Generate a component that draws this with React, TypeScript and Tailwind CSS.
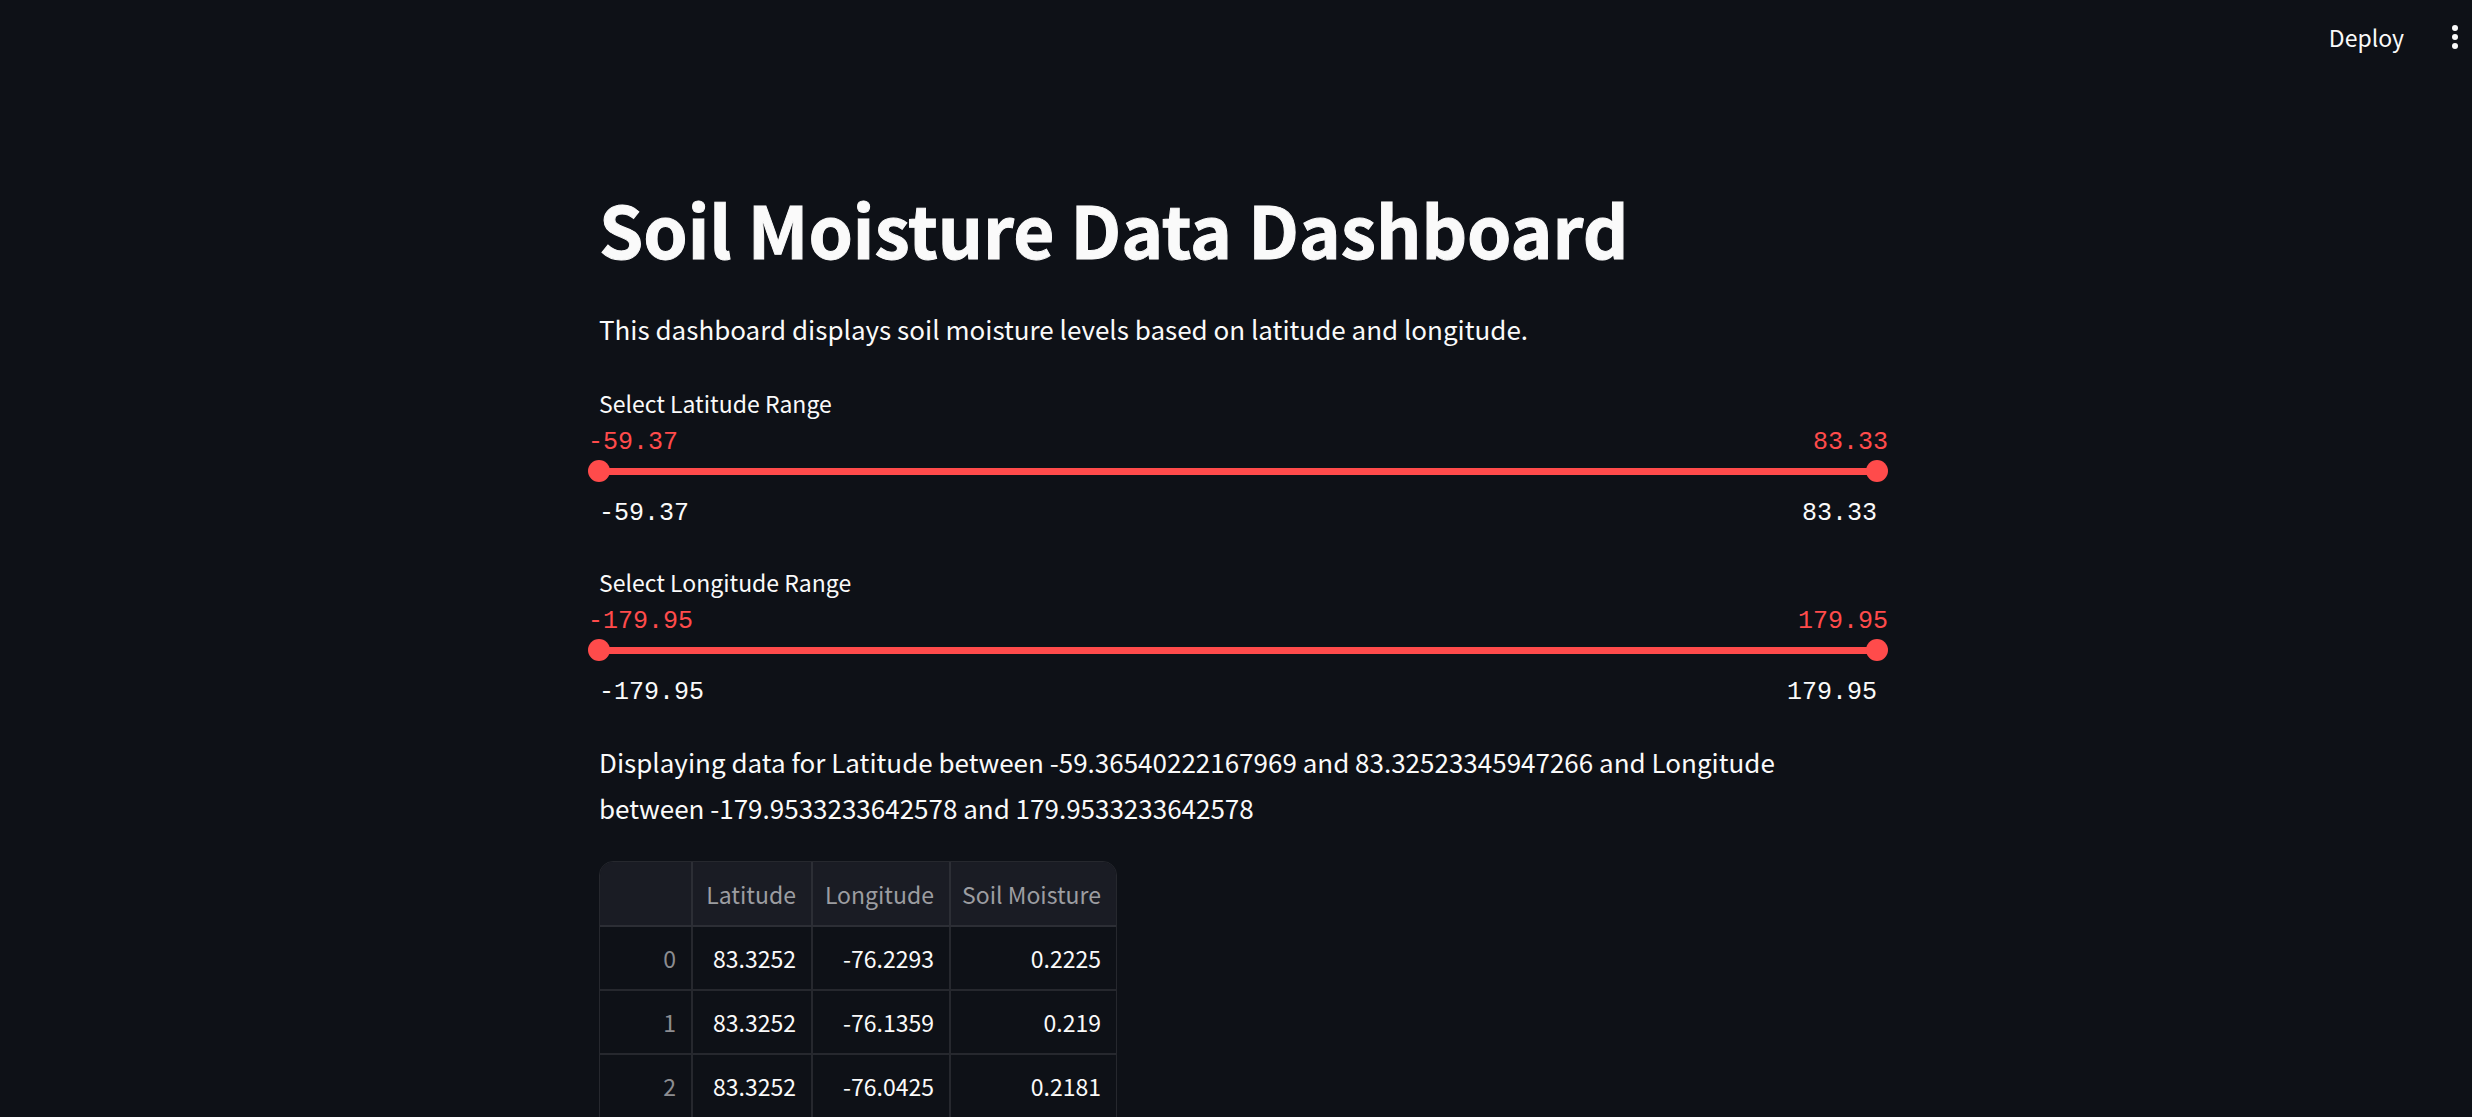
import { useId, useState } from "react";

const rows = [
  ["83.3252", "-76.2293", "0.2225"],
  ["83.3252", "-76.1359", "0.219"],
  ["83.3252", "-76.0425", "0.2181"],
];

const thumbInput =
  "pointer-events-none absolute inset-0 m-0 h-[22px] w-full appearance-none bg-transparent outline-none [&::-webkit-slider-thumb]:pointer-events-auto [&::-webkit-slider-thumb]:size-[22px] [&::-webkit-slider-thumb]:cursor-pointer [&::-webkit-slider-thumb]:appearance-none [&::-webkit-slider-thumb]:rounded-full [&::-webkit-slider-thumb]:bg-[#ff4b4b]";

function RangeSlider({ label, min, max }: { label: string; min: number; max: number }) {
  const id = useId();
  const [low, setLow] = useState(min);
  const [high, setHigh] = useState(max);
  const start = ((low - min) / (max - min)) * 100;
  const end = ((high - min) / (max - min)) * 100;

  return (
    <section className="flex flex-col">
      <label htmlFor={id} className="text-[23px] leading-9">
        {label}
      </label>
      <div className="-mx-[11px] mt-2 flex justify-between font-['Liberation_Mono',monospace] text-[25px] leading-7 text-[#ff4b4b]">
        <output>{low.toFixed(2)}</output>
        <output>{high.toFixed(2)}</output>
      </div>
      <div className="relative -mx-[11px] mt-[3px] flex h-[22px] items-center px-[11px]">
        <div className="h-[7px] w-full rounded bg-[#3b3d45]">
          <div
            className="h-full rounded bg-[#ff4b4b]"
            style={{ marginLeft: `${start}%`, width: `${end - start}%` }}
          />
        </div>
        <input
          id={id}
          type="range"
          min={min}
          max={max}
          step="any"
          value={low}
          onChange={(e) => setLow(Math.min(Number(e.target.value), high))}
          className={thumbInput}
        />
        <input
          type="range"
          aria-label={`${label} upper bound`}
          min={min}
          max={max}
          step="any"
          value={high}
          onChange={(e) => setHigh(Math.max(Number(e.target.value), low))}
          className={thumbInput}
        />
      </div>
      <div className="mt-[18px] flex justify-between font-['Liberation_Mono',monospace] text-[25px] leading-7">
        <span>{min.toFixed(2)}</span>
        <span>{max.toFixed(2)}</span>
      </div>
    </section>
  );
}

export default function App() {
  return (
    <div className="h-screen overflow-y-auto bg-[#0e1117] font-['Noto_Sans_CJK_SC',sans-serif] text-[#fafafa] [scrollbar-width:none]">
      <header className="flex h-[74px] items-center justify-end gap-[42px] pr-2">
        <button type="button" className="text-[23px] leading-9">
          Deploy
        </button>
        <button type="button" aria-label="Main menu" className="flex w-[18px] justify-center">
          <svg width="6" height="24" viewBox="0 0 6 24" fill="currentColor" aria-hidden="true">
            <circle cx="3" cy="3" r="3" />
            <circle cx="3" cy="12" r="3" />
            <circle cx="3" cy="21" r="3" />
          </svg>
        </button>
      </header>

      <div className="pl-1">
        <main className="mx-auto max-w-[1278px] pt-[106px]">
          <h1 className="text-[71px] leading-[96px] font-bold [-webkit-text-stroke:1px_#fafafa]">
            Soil Moisture Data Dashboard
          </h1>
          <p className="mt-[30px] text-[26px] leading-[46px]">
            This dashboard displays soil moisture levels based on latitude and longitude.
          </p>

          <div className="mt-[33px] flex flex-col gap-9">
            <RangeSlider label="Select Latitude Range" min={-59.36540222167969} max={83.32523345947266} />
            <RangeSlider label="Select Longitude Range" min={-179.9533233642578} max={179.9533233642578} />
          </div>

          <p className="mt-8 text-[26px] leading-[46px]">
            Displaying data for Latitude between -59.36540222167969 and 83.32523345947266 and Longitude
            between -179.9533233642578 and 179.9533233642578
          </p>

          <div className="mt-[30px] w-fit overflow-hidden rounded-t-[14px] border border-[#26282e]">
            <table className="table-fixed border-separate border-spacing-0 text-right text-[23px] leading-8">
              <colgroup>
                <col className="w-[93px]" />
                <col className="w-[120px]" />
                <col className="w-[138px]" />
                <col className="w-[165px]" />
              </colgroup>
              <thead>
                <tr className="h-[65px] bg-[#1a1c24] text-[#9c9da1]">
                  <td className="border-r-2 border-b-2 border-[#2c2e35]" />
                  <th scope="col" className="border-r-2 border-b-2 border-[#2c2e35] pr-[15px] font-normal">Latitude</th>
                  <th scope="col" className="border-r-2 border-b-2 border-[#2c2e35] pr-[15px] font-normal">Longitude</th>
                  <th scope="col" className="border-b-2 border-[#2c2e35] pr-[15px] font-normal whitespace-nowrap">Soil Moisture</th>
                </tr>
              </thead>
              <tbody>
                {rows.map(([lat, lon, moisture], i) => (
                  <tr key={i} className="h-16">
                    <th scope="row" className="border-r-2 border-b-2 border-[#26282e] pr-[15px] font-normal text-[#8c8d91]">
                      {i}
                    </th>
                    <td className="border-r-2 border-b-2 border-[#26282e] pr-[15px]">{lat}</td>
                    <td className="border-r-2 border-b-2 border-[#26282e] pr-[15px]">{lon}</td>
                    <td className="border-b-2 border-[#26282e] pr-[15px]">{moisture}</td>
                  </tr>
                ))}
              </tbody>
            </table>
          </div>
        </main>
      </div>
    </div>
  );
}
